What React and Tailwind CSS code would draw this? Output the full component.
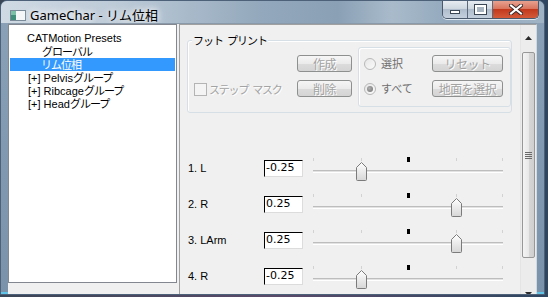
import React from 'react';

const ui = { fontFamily: '"Liberation Sans", "Noto Sans CJK JP", sans-serif' };
const jp = { fontFamily: '"Noto Sans CJK JP", "Liberation Sans", sans-serif' };

const treeItems = [
  { label: 'CATMotion Presets', indent: 'pl-[18px]' },
  { label: 'グローバル', indent: 'pl-[33px]', jp: true },
  { label: 'リム位相', indent: 'pl-[31px]', jp: true, selected: true },
  { label: '[+] Pelvis', tail: 'グループ', indent: 'pl-[19px]' },
  { label: '[+] Ribcage', tail: 'グループ', indent: 'pl-[19px]' },
  { label: '[+] Head', tail: 'グループ', indent: 'pl-[19px]' },
];

const rows = [
  { label: '1. L', value: '-0.25', pos: 48 },
  { label: '2. R', value: '0.25', pos: 143 },
  { label: '3. LArm', value: '0.25', pos: 143 },
  { label: '4. R', value: '-0.25', pos: 48 },
];

function DisabledButton({ children, w }) {
  return (
    <div
      className={`${w} h-[17px] flex items-center justify-center rounded-[3px] border border-[#8e8f8f] bg-[linear-gradient(180deg,#f6f6f6_0%,#ebebeb_50%,#dcdcdc_51%,#d4d4d4_100%)] text-[12px] text-[#a3a3a3] [text-shadow:1px_1px_0_#ffffff] tracking-[-0.5px]`}
      style={jp}
    >
      {children}
    </div>
  );
}

function Radio({ checked, label }) {
  return (
    <div className="flex items-center h-[17px] gap-[5px]">
      <div className="w-[12px] h-[12px] rounded-full border border-[#b8b8b8] bg-[linear-gradient(135deg,#e6e6e6,#fbfbfb)] flex items-center justify-center">
        {checked && <div className="w-[6px] h-[6px] rounded-full bg-[radial-gradient(circle_at_40%_40%,#b0b0b0,#6f6f6f)]" />}
      </div>
      <span className="text-[11px] text-[#6e6e6e]" style={jp}>{label}</span>
    </div>
  );
}

function Thumb() {
  return (
    <svg width="11" height="19" viewBox="0 0 11 19">
      <defs>
        <linearGradient id="tg" x1="0" x2="0" y1="0" y2="1">
          <stop offset="0" stopColor="#ffffff" />
          <stop offset="1" stopColor="#d6d6d6" />
        </linearGradient>
      </defs>
      <path d="M0.5 5.5 L5.5 0.5 L10.5 5.5 L10.5 17.5 Q10.5 18.5 9.5 18.5 L1.5 18.5 Q0.5 18.5 0.5 17.5 Z" fill="url(#tg)" stroke="#7b7b7b" />
    </svg>
  );
}

function Slider({ pos }) {
  const ticks = [0, 48, 143, 189];
  return (
    <div className="relative w-[200px] h-[26px]">
      {ticks.map((t) => (
        <div key={t} className="absolute top-[1px] w-px h-[3px] bg-[#d2d2d2]" style={{ left: t }} />
      ))}
      <div className="absolute top-0 left-[94px] w-[3px] h-[5px] bg-black" />
      <div className="absolute top-[13px] left-0 w-[190px] h-[3px] border-t border-[#bdbdbd] border-b border-b-white bg-[#e2e2e2]" />
      <div className="absolute top-[5px]" style={{ left: pos - 5 }}>
        <Thumb />
      </div>
    </div>
  );
}

export default function App() {
  return (
    <div className="w-[548px] h-[297px] overflow-hidden bg-[linear-gradient(90deg,#3a4656_0%,#5a4a6a_50%,#2f4660_100%)]" style={ui}>
      <div className="w-[545px] h-[295px] rounded-t-[7px] border border-[#4d6278] bg-[linear-gradient(180deg,#8aa1b7_0%,#7a93ab_100%)] flex flex-col overflow-hidden shadow-[inset_0_-2px_0_#5fc4e8]">
        {/* title bar */}
        <div className="h-[27px] flex items-start bg-[linear-gradient(90deg,#cfdae4_0%,#bccad7_22%,#93a8bc_48%,#8aa0b5_62%,#a9bbcb_72%,#93a9bd_82%,#9fb3c5_100%)]">
          <div className="mt-[9px] ml-[9px]">
            <svg width="16" height="11" viewBox="0 0 16 11">
              <rect x="0.5" y="0.5" width="15" height="10" fill="#f4f6f8" stroke="#7a8a98" />
              <rect x="1" y="1" width="5" height="9" fill="#3f8f7a" />
              <rect x="1" y="1" width="5" height="4" fill="#7cc0a8" />
            </svg>
          </div>
          <div className="ml-[4px] mt-[6px] text-[13px] leading-[16px] text-black [text-shadow:0_0_6px_#ffffff,0_0_10px_#ffffff]" style={{ fontFamily: '"Noto Sans", "Noto Sans CJK JP", sans-serif' }}>
            GameChar - リム位相
          </div>
          <div className="ml-auto mr-[5px] flex h-[19px] -mt-px rounded-b-[5px] border border-t-0 border-[#4a5a6c] overflow-hidden shadow-[0_1px_0_#dfe8f0]">
            <div className="w-[25px] flex items-center justify-center border-r border-[#5a6a7c] bg-[linear-gradient(180deg,#e9eef3_0%,#cdd6df_50%,#aebccb_51%,#c4d0dc_100%)]">
              <div className="w-[10px] h-[4px] mt-[6px] bg-white border border-[#3a4654]" />
            </div>
            <div className="w-[25px] flex items-center justify-center border-r border-[#5a6a7c] bg-[linear-gradient(180deg,#e9eef3_0%,#cdd6df_50%,#aebccb_51%,#c4d0dc_100%)]">
              <div className="w-[11px] h-[9px] border-2 border-white outline outline-1 outline-[#3a4654] bg-[#a8b4c0]" />
            </div>
            <div className="w-[45px] flex items-center justify-center bg-[linear-gradient(180deg,#e9a796_0%,#d9735c_50%,#c2381c_51%,#d45a3a_100%)]">
              <svg width="14" height="11" viewBox="0 0 14 11">
                <path d="M2 1.5 L12 9.5 M12 1.5 L2 9.5" stroke="#3a2a2a" strokeWidth="4" strokeLinecap="square" />
                <path d="M2 1.5 L12 9.5 M12 1.5 L2 9.5" stroke="#ffffff" strokeWidth="2" strokeLinecap="square" />
              </svg>
            </div>
          </div>
        </div>

        {/* client area */}
        <div className="flex-1 flex px-[7px] pb-[6px]">
          <div className="flex-1 flex gap-[2px] bg-[#f0f0f0] border-t border-[#8a9aaa]">
            {/* tree */}
            <div className="w-[169px] h-[259px] bg-white border border-[#828790] pt-[7px]">
              {treeItems.map((it) => (
                <div key={it.label} className={`h-[13px] flex items-center ${it.selected ? 'mx-[1px] bg-[#3399ff] text-white' : 'text-black'} ${it.indent}`}>
                  <span className={`text-[11px] leading-[13px] ${it.jp ? 'tracking-[-1px]' : ''}`} style={it.jp ? jp : ui}>
                    {it.label}
                    {it.tail && <span className="tracking-[-1px]" style={jp}>{it.tail}</span>}
                  </span>
                </div>
              ))}
            </div>

            {/* right panel */}
            <div className="flex-1 flex border border-[#a0a0a0] border-r-[#d0d8e0]">
              <div className="flex-1 overflow-hidden">
                {/* footprint group */}
                <div className="relative ml-[7px] mr-[8px] mt-[15px] h-[73px] rounded-[3px] border border-[#d5dfe5] shadow-[inset_1px_1px_0_#ffffff] flex items-start pt-[6px]">
                  <div className="absolute -top-[9px] left-[4px] px-[1px] bg-[#f0f0f0] text-[11px] leading-[16px] tracking-[-1px] text-black flex" style={jp}>
                    <span>フット</span><span className="ml-[4px]">プリント</span>
                  </div>
                  <div className="w-[108px] pt-[34px] pl-[6px] flex items-center gap-[2px]">
                    <div className="w-[13px] h-[13px] border border-[#b4b4b4] bg-[#f4f4f4]" />
                    <span className="flex text-[11px] tracking-[-1.2px] text-[#a3a3a3] [text-shadow:1px_1px_0_#ffffff]" style={jp}>
                      <span>ステップ</span><span className="ml-[4px]">マスク</span>
                    </span>
                  </div>
                  <div className="ml-[1px] mt-[8px] flex flex-col gap-[8px]">
                    <DisabledButton w="w-[55px]">作成</DisabledButton>
                    <DisabledButton w="w-[55px]">削除</DisabledButton>
                  </div>
                  <div className="ml-[6px] w-[153px] h-[60px] rounded-[3px] border border-[#d5dfe5] shadow-[inset_1px_1px_0_#ffffff] flex pl-[5px] pt-[7px]">
                    <div className="w-[68px] flex flex-col gap-[8px]">
                      <Radio label="選択" />
                      <Radio checked label="すべて" />
                    </div>
                    <div className="flex flex-col gap-[8px]">
                      <DisabledButton w="w-[71px]">リセット</DisabledButton>
                      <DisabledButton w="w-[71px]">地面を選択</DisabledButton>
                    </div>
                  </div>
                </div>

                {/* rows */}
                <div className="mt-[44px]">
                  {rows.map((r, i) => (
                    <div key={i} className="h-[36px] flex items-start pl-[8px]">
                      <div className="w-[76px] h-[17px] mt-[3px] flex items-center text-[11px] text-black">{r.label}</div>
                      <div className="w-[39px] h-[17px] mt-[3px] border border-t-black border-l-black border-r-[#dcdcdc] border-b-[#dcdcdc] bg-white flex items-center pl-[1px] text-[11px] text-black" style={{ fontFamily: '"DejaVu Sans", sans-serif' }}>
                        {r.value}
                      </div>
                      <div className="ml-[10px]">
                        <Slider pos={r.pos} />
                      </div>
                    </div>
                  ))}
                </div>
              </div>

              {/* scrollbar */}
              <div className="w-[16px] flex flex-col bg-[#ececec] border-l border-[#e4e4e4]">
                <div className="h-[27px] shrink-0 flex items-start justify-center pt-[11px]">
                  <svg width="7" height="4" viewBox="0 0 7 4"><path d="M3.5 0 L7 4 L0 4 Z" fill="#2a2a2a" /></svg>
                </div>
                <div className="h-[206px] shrink-0 mx-px rounded-[2px] border border-[#979797] bg-[linear-gradient(90deg,#f4f4f4_0%,#e8e8e8_50%,#d6d6d6_51%,#cfcfcf_100%)] flex items-center justify-center">
                  <div className="flex flex-col gap-[1px]">
                    <div className="w-[7px] h-[1px] bg-[#6a6a6a]" />
                    <div className="w-[7px] h-[1px] bg-[#6a6a6a]" />
                    <div className="w-[7px] h-[1px] bg-[#6a6a6a]" />
                    <div className="w-[7px] h-[1px] bg-[#6a6a6a]" />
                  </div>
                </div>
                <div className="flex-1 flex items-end justify-center pb-[5px]">
                  <svg width="7" height="4" viewBox="0 0 7 4"><path d="M0 0 L7 0 L3.5 4 Z" fill="#2a2a2a" /></svg>
                </div>
              </div>
            </div>
          </div>
        </div>
      </div>
    </div>
  );
}
